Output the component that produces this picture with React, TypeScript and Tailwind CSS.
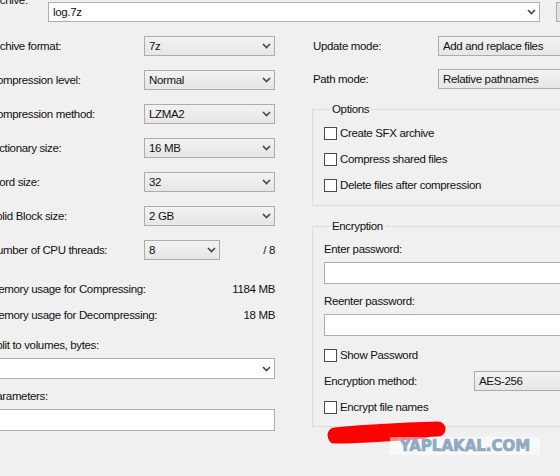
import React from "react";

const Arrow = () => (
  <svg width="9" height="6" viewBox="0 0 9 6" className="shrink-0">
    <polyline points="1,1 4.5,4.5 8,1" fill="none" stroke="#4a4a4a" strokeWidth="1.7" />
  </svg>
);

function Combo({
  value = "",
  editable = false,
  className = "",
  arrow = true,
}: {
  value?: string;
  editable?: boolean;
  className?: string;
  arrow?: boolean;
}) {
  return (
    <div
      className={
        "h-[20px] flex items-center justify-between pl-[4px] pr-[3px] border shrink-0 " +
        (editable
          ? "bg-white border-[#abadb3] "
          : "bg-gradient-to-b from-[#f2f2f2] to-[#e6e6e6] border-[#acacac] ") +
        className
      }
    >
      <span className="whitespace-nowrap">{value}</span>
      {arrow && <Arrow />}
    </div>
  );
}

const Box = () => <div className="w-[13px] h-[13px] border border-[#4a4a4a] bg-white shrink-0" />;

function Check({ label }: { label: string }) {
  return (
    <div className="h-[16px] flex items-center gap-[3px]">
      <Box />
      <span className="whitespace-nowrap">{label}</span>
    </div>
  );
}

function Row({ label, children }: { label: string; children: React.ReactNode }) {
  return (
    <div className="h-[20px] flex items-center justify-between">
      <span className="whitespace-nowrap">{label}</span>
      {children}
    </div>
  );
}

export default function App() {
  return (
    <div className="w-[560px] h-[476px] overflow-hidden bg-[#f0f0f0] relative text-[#111] text-[11.5px] tracking-[-0.35px] leading-[14px] font-['Liberation_Sans',Arial,sans-serif]">
      {/* top archive row */}
      <div className="flex items-start h-[36px] pt-[2px]">
        <div className="ml-[-11px] w-[59px] -mt-[9px] shrink-0">Archive:</div>
        <Combo editable value="log.7z" className="w-[492px]" />
        <div className="ml-[16px] w-[20px] h-[20px] border border-[#adadad] bg-[#e1e1e1] shrink-0" />
      </div>

      <div className="flex items-start">
        {/* left column */}
        <div className="ml-[-11px] w-[286px] flex flex-col shrink-0">
          <div className="flex flex-col gap-[14px]">
            <Row label="Archive format:">
              <Combo value="7z" className="w-[131px]" />
            </Row>
            <Row label="Compression level:">
              <Combo value="Normal" className="w-[131px]" />
            </Row>
            <Row label="Compression method:">
              <Combo value="LZMA2" className="w-[131px]" />
            </Row>
            <Row label="Dictionary size:">
              <Combo value="16 MB" className="w-[131px]" />
            </Row>
            <Row label="Word size:">
              <Combo value="32" className="w-[131px]" />
            </Row>
            <Row label="Solid Block size:">
              <Combo value="2 GB" className="w-[131px]" />
            </Row>
            <div className="h-[20px] flex items-center">
              <span className="w-[155px] whitespace-nowrap">Number of CPU threads:</span>
              <Combo value="8" className="w-[76px]" />
              <span className="ml-auto">/ 8</span>
            </div>
          </div>

          <div className="mt-[22px] h-[14px] flex justify-between">
            <span>Memory usage for Compressing:</span>
            <span>1184 MB</span>
          </div>
          <div className="mt-[12px] h-[14px] flex justify-between">
            <span>Memory usage for Decompressing:</span>
            <span>18 MB</span>
          </div>

          <div className="mt-[16px] h-[14px]">Split to volumes, bytes:</div>
          <Combo editable className="mt-[6px] h-[21px] w-[286px]" />

          <div className="mt-[10px] h-[14px]">Parameters:</div>
          <div className="mt-[6px] h-[22px] w-[286px] bg-white border border-[#abadb3]" />
        </div>

        {/* right column */}
        <div className="ml-[37px] w-[300px] flex flex-col shrink-0">
          <div className="flex flex-col gap-[13px]">
            <div className="h-[20px] flex items-center">
              <span className="w-[126px] pl-[1px]">Update mode:</span>
              <Combo value="Add and replace files" arrow={false} className="w-[160px]" />
            </div>
            <div className="h-[20px] flex items-center">
              <span className="w-[126px] pl-[1px]">Path mode:</span>
              <Combo value="Relative pathnames" arrow={false} className="w-[160px]" />
            </div>
          </div>

          <fieldset className="mt-[13px] border border-[#dcdcdc] pl-[11px] pb-[12px] flex flex-col gap-[10px]">
            <legend className="ml-[6px] px-[2px] leading-[14px]">Options</legend>
            <div className="pt-[9px] flex flex-col gap-[10px]">
              <Check label="Create SFX archive" />
              <Check label="Compress shared files" />
              <Check label="Delete files after compression" />
            </div>
          </fieldset>

          <fieldset className="mt-[13px] border border-[#dcdcdc] pl-[11px] pb-[11px]">
            <legend className="ml-[6px] px-[2px] leading-[14px]">Encryption</legend>
            <div className="pt-[9px] flex flex-col">
              <div className="h-[14px]">Enter password:</div>
              <div className="mt-[6px] h-[22px] w-[260px] bg-white border border-[#abadb3]" />
              <div className="mt-[10px] h-[14px]">Reenter password:</div>
              <div className="mt-[6px] h-[22px] w-[260px] bg-white border border-[#abadb3]" />
              <div className="mt-[11px]">
                <Check label="Show Password" />
              </div>
              <div className="mt-[8px] h-[20px] flex items-center">
                <span className="w-[150px]">Encryption method:</span>
                <Combo value="AES-256" arrow={false} className="w-[120px]" />
              </div>
              <div className="mt-[8px]">
                <Check label="Encrypt file names" />
              </div>
            </div>
          </fieldset>
        </div>
      </div>

      {/* red scribble overlay */}
      <svg className="absolute left-[320px] top-[416px]" width="140" height="34" viewBox="0 0 140 34">
        <path
          d="M15 19 C 45 16, 85 14, 118 13"
          fill="none"
          stroke="#ff0000"
          strokeWidth="15"
          strokeLinecap="round"
        />
        <path d="M14 22 C 40 22, 70 20, 105 17" fill="none" stroke="#ff0000" strokeWidth="11" strokeLinecap="round" />
      </svg>

      {/* watermark */}
      <div className="absolute left-[390px] top-[437px] w-[150px] h-[18px] bg-white/50 flex items-center justify-center">
        <span className="font-['DejaVu_Sans',sans-serif] font-bold text-[15px] leading-[16px] tracking-[0px] text-[#94abc2] [-webkit-text-stroke:0.7px_#8ea6be]">
          YAPLAKAL.COM
        </span>
      </div>
    </div>
  );
}
